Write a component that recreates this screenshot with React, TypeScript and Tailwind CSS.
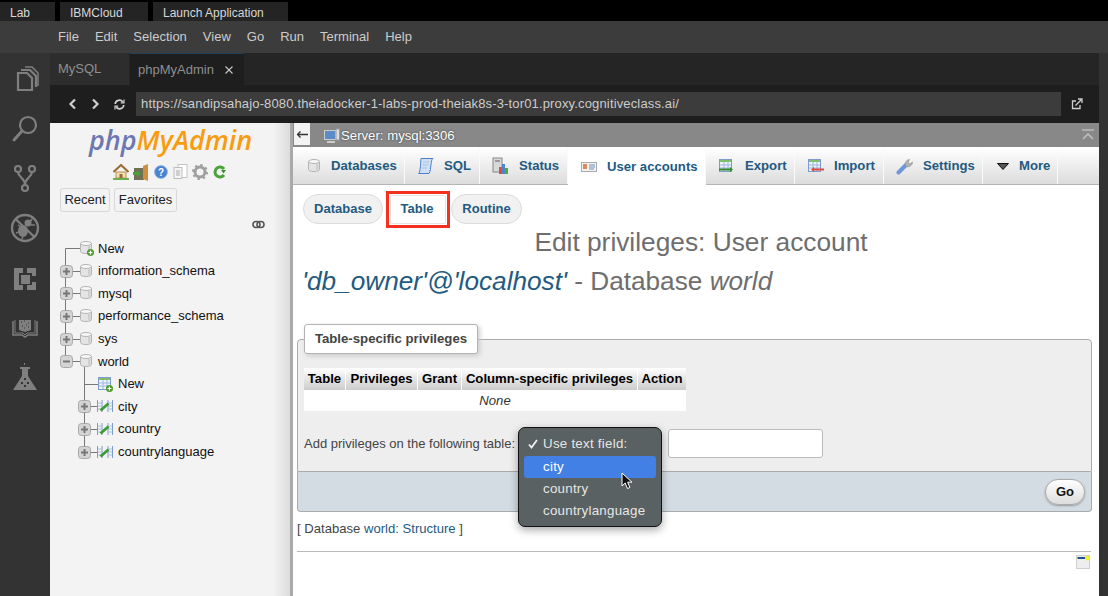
import React from "react";

const Db = ({ x = 0, y = 0 }: { x?: number; y?: number }) => (
  <g transform={`translate(${x} ${y})`}>
    <path d="M0.5 2.5v8c0 1.2 2.4 2 5.5 2s5.5-.8 5.5-2v-8z" fill="#e4e4e4" stroke="#b5b5b5" />
    <ellipse cx="6" cy="2.5" rx="5.5" ry="2" fill="#f7f7f7" stroke="#b5b5b5" />
    <rect x="8" y="5" width="2.5" height="6" fill="#cfcfcf" />
  </g>
);

const PlusBox = ({ x, y, minus }: { x: number; y: number; minus?: boolean }) => (
  <g transform={`translate(${x} ${y})`}>
    <rect x="0.5" y="0.5" width="12" height="12" rx="3" fill="#d4d4d4" stroke="#a8a8a8" />
    <rect x="3" y="5.5" width="7" height="2" fill="#777" />
    {!minus && <rect x="5.5" y="3" width="2" height="7" fill="#777" />}
  </g>
);

const GreenPlus = ({ x, y }: { x: number; y: number }) => (
  <g transform={`translate(${x} ${y})`}>
    <circle cx="3.5" cy="3.5" r="3.5" fill="#4f9a2d" />
    <path d="M1.5 3.5h4M3.5 1.5v4" stroke="#fff" strokeWidth="1.2" />
  </g>
);

const TableGlyph = ({ x, y }: { x: number; y: number }) => (
  <g transform={`translate(${x} ${y})`}>
    <rect x="0.5" y="0.5" width="12" height="12" fill="#eef3fb" stroke="#7d9ccc" />
    <rect x="1" y="1" width="11" height="2" fill="#7fc06a" />
    <path d="M1 6h11M1 9h11M5 3v9M9 3v9" stroke="#9db6dc" strokeWidth="1" />
  </g>
);

const ViewGlyph = ({ x, y }: { x: number; y: number }) => (
  <g transform={`translate(${x} ${y})`}>
    <path d="M0.5 1v12M5 1v12M11 1v12M15.5 1v12" stroke="#7d9ccc" strokeWidth="1" fill="none" />
    <path d="M1 4h4M1 7h4M1 10h4M11 4h4M11 7h4M11 10h4" stroke="#a9c0e2" strokeWidth="1" />
    <path d="M3.5 11.5L11.5 4.5" stroke="#3e9a34" strokeWidth="2.8" />
  </g>
);

type TreeKind = "rootNew" | "db" | "dbOpen" | "tblNew" | "tbl";

const TreeRow = ({ kind, label, first, last }: { kind: TreeKind; label: string; first?: boolean; last?: boolean }) => {
  const top = kind === "rootNew" || kind === "db" || kind === "dbOpen";
  const w = top ? 38 : 58;
  return (
    <div className="flex items-center h-[22.6px] text-[13px] text-[#111] leading-none">
      <svg width={w} height="23" viewBox={`0 0 ${w} 23`} className="shrink-0 overflow-visible">
        {top ? (
          <g>
            <path d={first ? "M5.5 11.5V23" : kind === "dbOpen" ? "M5.5 0V11" : "M5.5 0V23"} stroke="#777" />
            <path d="M5.5 11.5H21" stroke="#777" />
            {kind !== "rootNew" && <PlusBox x={0} y={5} minus={kind === "dbOpen"} />}
            <Db x={20} y={4} />
            {kind === "rootNew" && <GreenPlus x={27} y={12} />}
            {kind === "dbOpen" && <path d="M24.5 17V23" stroke="#777" />}
          </g>
        ) : (
          <g>
            <path d={last ? "M24.5 0V11" : "M24.5 0V23"} stroke="#777" />
            <path d="M24.5 11.5H38" stroke="#777" />
            {kind === "tblNew" ? (
              <g>
                <TableGlyph x={38} y={4} />
                <GreenPlus x={46} y={12} />
              </g>
            ) : (
              <g>
                <PlusBox x={18} y={5} />
                <ViewGlyph x={37} y={4} />
              </g>
            )}
          </g>
        )}
      </svg>
      <span className="whitespace-nowrap -mt-[1px]">{label}</span>
    </div>
  );
};

const SideIcon = ({ children, cls }: { children: React.ReactNode; cls: string }) => (
  <div className={`flex justify-center ${cls}`}>
    <svg width="30" height="30" viewBox="0 0 30 30" fill="none" stroke="#7f7f7f" strokeWidth="2.2">
      {children}
    </svg>
  </div>
);

const tabs = [
  { label: "Databases", w: "w-[111px]", gap: "w-[24px]", pl: "pl-[13px]", icon: <svg width="14" height="14" viewBox="0 0 14 14"><Db x={1} y={0} /></svg> },
  { label: "SQL", w: "w-[75px]", gap: "w-[27px]", pl: "pl-[12px]", icon: <svg width="18" height="18" viewBox="0 0 18 18"><path d="M4 1.5h12c-1.5 1-1.5 3-2 6s-.5 7-2 9H1.5c1.500-1 1.500-4 2-8s0-5.500.5-7z" fill="#cfe0f5" stroke="#4d7fc4" /><path d="M6 5h6M5.500 8h6M5 11h5" stroke="#a8c3e8" /></svg> },
  { label: "Status", w: "w-[88px]", gap: "w-[27px]", pl: "pl-[12px]", icon: <svg width="18" height="18" viewBox="0 0 18 18"><rect x="1" y="1" width="9" height="14" fill="#d8d8d8" stroke="#888" /><rect x="3" y="3" width="5" height="2" fill="#999" /><rect x="7" y="10" width="3" height="7" fill="#d94f3f" /><rect x="10" y="7" width="3" height="10" fill="#4d86d0" /><rect x="13" y="11" width="3" height="6" fill="#55a83a" /></svg> },
  { label: "User accounts", w: "w-[138px]", gap: "w-[26px]", pl: "pl-[13px]", active: true, icon: <svg width="16" height="12" viewBox="0 0 16 12"><rect x="0.500" y="1.500" width="15" height="9" fill="#f2f2f2" stroke="#aaa" /><rect x="2" y="3" width="4" height="5" fill="#d98a5f" /><path d="M8 4h6M8 6h6M8 8h5" stroke="#6d8fbe" /></svg> },
  { label: "Export", w: "w-[89px]", gap: "w-[27px]", pl: "pl-[12px]", icon: <svg width="16" height="15" viewBox="0 0 16 15"><TableGlyph x={1} y={0} /><path d="M1 10.500h12" stroke="#2f8a2a" strokeWidth="2" /><path d="M12 8l3 2.500-3 2.500z" fill="#2f8a2a" /></svg> },
  { label: "Import", w: "w-[89px]", gap: "w-[26px]", pl: "pl-[13px]", icon: <svg width="16" height="15" viewBox="0 0 16 15"><TableGlyph x={0} y={0} /><path d="M5 10.500h11" stroke="#e2443f" strokeWidth="2" /><path d="M6 8l-3 2.500 3 2.500z" fill="#e2443f" /></svg> },
  { label: "Settings", w: "w-[99px]", gap: "w-[27px]", pl: "pl-[12px]", icon: <svg width="17" height="17" viewBox="0 0 17 17"><path d="M2.500 14.500L10 7" stroke="#6f96d8" strokeWidth="4" strokeLinecap="round" /><path d="M9.500 7.500c-1-2.500.5-5.500 4-6l-1.500 3 2 1.500 2.500-2c0 3.500-3.500 5.500-6 4.500z" fill="#b3b3b3" stroke="#8a8a8a" strokeWidth="0.6" /></svg> },
  { label: "More", w: "w-[75px]", gap: "w-[22px]", pl: "pl-[14px]", icon: <svg width="12" height="7" viewBox="0 0 12 7"><path d="M0.500 0.500h11L6 6.500z" fill="#555" stroke="#111" /></svg> },
];

const Th = ({ w, children }: { w: string; children: string }) => (
  <th className={`${w} h-[22px] font-bold border-r border-white last:border-r-0 bg-gradient-to-b from-[#ffffff] to-[#cccccc] text-center p-0`}>{children}</th>
);

export default function App() {
  return (
    <div className="w-[1108px] h-[596px] overflow-hidden flex flex-col bg-black font-['Liberation_Sans','Arial',sans-serif]">
      {/* top tabs */}
      <div className="h-[21px] bg-black flex items-end text-[12px] text-[#d8d8d8] shrink-0">
        <div className="w-[55px] h-[19px] bg-[#242424] pl-[10px] leading-[23px]">Lab</div>
        <div className="w-[88px] h-[19px] bg-[#242424] ml-[5px] pl-[10px] leading-[23px]">IBMCloud</div>
        <div className="w-[135px] h-[19px] bg-[#242424] ml-[5px] pl-[10px] leading-[23px]">Launch Application</div>
      </div>
      {/* menu */}
      <div className="h-[32px] bg-[#3c3c3c] flex items-center gap-[16px] pl-[58px] text-[13px] text-[#cccccc] shrink-0">
        {["File", "Edit", "Selection", "View", "Go", "Run", "Terminal", "Help"].map((m) => (
          <span key={m}>{m}</span>
        ))}
      </div>
      <div className="flex flex-1 min-h-0">
        {/* activity bar */}
        <div className="w-[50px] bg-[#333333] shrink-0 flex flex-col pt-[10px]">
          <SideIcon cls="h-[30px] mb-[20px]">
            <path d="M17 10H8v17h14V15z" />
            <path d="M11 7h9l6 6v11" />
            <path d="M15 4h7l6 6v13" strokeWidth="1.500" />
          </SideIcon>
          <SideIcon cls="h-[30px] mb-[20px]">
            <circle cx="18" cy="12" r="8" />
            <path d="M12 18L4 27" strokeWidth="3" strokeLinecap="round" />
          </SideIcon>
          <SideIcon cls="h-[30px] mb-[20px]">
            <circle cx="8" cy="6" r="3" />
            <circle cx="22" cy="6" r="3" />
            <circle cx="15" cy="25" r="3" />
            <path d="M8 9c0 5 7 6 7 13M22 9c0 5-7 6-7 13" />
          </SideIcon>
          <SideIcon cls="h-[30px] mb-[21px]">
            <circle cx="15" cy="15" r="13" strokeWidth="2.400" />
            <path d="M5.500 6L24.500 24" strokeWidth="2.400" />
            <ellipse cx="13" cy="18" rx="5" ry="6" fill="#7f7f7f" stroke="none" />
            <circle cx="18" cy="10" r="3.500" fill="#7f7f7f" stroke="none" />
            <path d="M22 6l-2 3M25 12l-4 0M8 12l3 2M6 20l3-1M12 26l1-3" strokeWidth="1.500" />
          </SideIcon>
          <SideIcon cls="h-[30px] mb-[18px]">
            <path d="M4 4h9v5H9v12h4v5H4zM17 4h9v8h-4V9h-5zM26 18v8h-9v-5h5v-3z" fill="#7f7f7f" stroke="none" />
            <rect x="11" y="11" width="9" height="9" fill="#7f7f7f" stroke="none" />
          </SideIcon>
          <SideIcon cls="h-[30px] mb-[20px]">
            <path d="M3 9v14h9l3 2 3-2h9V9" strokeWidth="1.500" />
            <path d="M5 8v13h8l2 2 2-2h8V8" strokeWidth="1" />
            <path d="M9 8h12v10l-6 2-6-2z" fill="#7f7f7f" stroke="none" />
            <path d="M11 10h1M14 9h1M18 11h1M12 14h1M16 13h1M14 16h1M18 15h1" stroke="#333" strokeWidth="1.200" />
          </SideIcon>
          <SideIcon cls="h-[30px] mt-[1px]">
            <path d="M12 6h6v7l9 14H3l9-14z" fill="#7f7f7f" stroke="none" />
            <path d="M10 5h10" strokeWidth="2" />
            <path d="M14 1h1" strokeWidth="2" />
            <path d="M14 16h2M11 20h2M17 20h2M14 23h2" stroke="#333" strokeWidth="2" />
          </SideIcon>
        </div>
        <div className="flex-1 flex flex-col min-w-0">
          {/* editor tabs */}
          <div className="h-[32px] bg-[#252526] flex text-[13px] shrink-0">
            <div className="w-[79px] bg-[#2d2d2d] text-[#8f8f8f] pl-[8px] leading-[31px]">MySQL</div>
            <div className="w-[114px] ml-[1px] bg-[#1e1e1e] text-[#8f8f8f] pl-[8px] border-t border-[#21405c] flex items-center gap-[11px]">
              <span>phpMyAdmin</span>
              <svg width="8" height="8" viewBox="0 0 8 8"><path d="M0.500 0.500l7 7M7.500 0.500l-7 7" stroke="#c8c8c8" strokeWidth="1.100" /></svg>
            </div>
          </div>
          {/* url bar */}
          <div className="h-[38px] bg-[#1e1e1e] flex items-center shrink-0">
            <div className="w-[86px] flex items-center pl-[18px] gap-[14px] shrink-0">
              <svg width="9" height="12" viewBox="0 0 9 12"><path d="M7 1.500L2.500 6 7 10.500" fill="none" stroke="#d0d0d0" strokeWidth="2.200" /></svg>
              <svg width="9" height="12" viewBox="0 0 9 12"><path d="M2 1.500L6.500 6 2 10.500" fill="none" stroke="#d0d0d0" strokeWidth="2.200" /></svg>
              <svg width="11" height="11" viewBox="0 0 11 11" fill="none" stroke="#d0d0d0" strokeWidth="1.700"><path d="M1.200 5A4.200 4.200 0 0 1 8.800 3M9.800 6A4.200 4.200 0 0 1 2.200 8" /><path d="M10 0.500v3.300H6.800M1 10.500V7.200h3.200" strokeWidth="1.200" /></svg>
            </div>
            <div className="w-[925px] h-[24px] bg-[#3c3c3c] text-[#cccccc] text-[13px] leading-[23px] pl-[5px] tracking-[0.15px]">
              https://sandipsahajo-8080.theiadocker-1-labs-prod-theiak8s-3-tor01.proxy.cognitiveclass.ai/
            </div>
            <svg className="ml-[10px]" width="12" height="12" viewBox="0 0 12 12" fill="none" stroke="#d0d0d0" strokeWidth="1.300"><path d="M9 7v3.500H1.500V3H5" /><path d="M4.500 7.500L10 2M7 1h4v4" /></svg>
          </div>
          {/* browser */}
          <div className="flex-1 flex min-h-0 bg-white">
            {/* nav */}
            <div className="w-[240px] shrink-0 flex flex-col bg-gradient-to-r from-[#f3f3f3] from-[93%] to-[#dcdcdc]">
              <div className="text-center font-['Open_Sans'] font-semibold italic text-[27px] leading-[34px] pl-[1px]">
                <span className="text-[#6c78af]">php</span><span className="text-[#f89c0e]">MyAdmin</span>
              </div>
              <div className="flex justify-start pl-[63px] mt-[7px] h-[17px] gap-[4px]">
                <svg width="16" height="16" viewBox="0 0 16 16"><path d="M0.500 8L8 1l7.500 7" fill="none" stroke="#9a6a2f" strokeWidth="2" /><rect x="3" y="8" width="10" height="6" fill="#f1dfb8" stroke="#b98e4f" /><rect x="6.500" y="10" width="3" height="4" fill="#9a6a2f" /><path d="M0 15h16" stroke="#6ab04c" strokeWidth="2" /></svg>
                <svg width="16" height="17" viewBox="0 0 16 17"><rect x="1" y="4" width="10" height="12" fill="#6f6f55" /><path d="M10 15V2l5-2v17z" fill="#cf8f3e" /><path d="M0 8h4V6l4 3.500L4 13v-2H0z" fill="#48a23a" /></svg>
                <svg className="ml-[1px] mt-[1px]" width="14" height="14" viewBox="0 0 14 14"><circle cx="7" cy="7" r="6.500" fill="#4a82cf" stroke="#9dbbe6" /><text x="7" y="10.500" textAnchor="middle" fontSize="10" fontWeight="bold" fill="#fff" fontFamily="Liberation Sans">?</text></svg>
                <svg className="ml-[1px]" width="15" height="15" viewBox="0 0 15 15"><rect x="5" y="0.500" width="9" height="13" fill="#fff" stroke="#c4c4c4" /><rect x="1" y="3.500" width="8" height="11" fill="#f4f4f4" stroke="#bdbdbd" /><path d="M3 6h4v6H3z" fill="#cfcfcf" /></svg>
                <svg width="16" height="16" viewBox="0 0 16 16"><circle cx="8" cy="8" r="5" fill="none" stroke="#a0a0a0" strokeWidth="3" /><circle cx="8" cy="8" r="7" fill="none" stroke="#a0a0a0" strokeWidth="2" strokeDasharray="2.500 3" /></svg>
                <svg className="ml-[1px] mt-[1px]" width="13" height="14" viewBox="0 0 13 14" fill="none"><path d="M11 4A5 5 0 1 0 11 10" stroke="#49a23a" strokeWidth="3" /><path d="M8 5h5l-2.500 3.500z" fill="#3d8e30" /></svg>
              </div>
              <div className="flex pl-[10px] gap-[4px] mt-[7px] text-[13px] text-[#222]">
                <div className="w-[50px] h-[24px] leading-[22px] text-center border border-[#d8d8d8] rounded-[3px] bg-[#f3f3f3]">Recent</div>
                <div className="w-[63px] h-[24px] leading-[22px] text-center border border-[#d8d8d8] rounded-[3px] bg-[#f3f3f3]">Favorites</div>
              </div>
              <div className="flex justify-end pr-[25px] mt-[8px] h-[10px]">
                <svg width="13" height="9" viewBox="0 0 13 9" fill="none" stroke="#555" strokeWidth="1.600"><rect x="1" y="1.500" width="7" height="6" rx="3" /><rect x="5" y="1.500" width="7" height="6" rx="3" /></svg>
              </div>
              <div className="pl-[10px] mt-[7.4px]">
                <TreeRow kind="rootNew" label="New" first />
                <TreeRow kind="db" label="information_schema" />
                <TreeRow kind="db" label="mysql" />
                <TreeRow kind="db" label="performance_schema" />
                <TreeRow kind="db" label="sys" />
                <TreeRow kind="dbOpen" label="world" />
                <TreeRow kind="tblNew" label="New" />
                <TreeRow kind="tbl" label="city" />
                <TreeRow kind="tbl" label="country" />
                <TreeRow kind="tbl" label="countrylanguage" last />
              </div>
            </div>
            <div className="w-[3px] bg-[#a9a9a9] shrink-0" />
            {/* main */}
            <div className="flex-1 min-w-0 relative text-[13px] text-[#444]">
              <div className="h-[24px] bg-[#888888] flex items-center">
                <div className="w-[16px] h-[22px] -mt-[2px] ml-[1px] bg-[#f3f3f3] flex items-center justify-center">
                  <svg width="11" height="7" viewBox="0 0 11 7"><path d="M3.500 0.500L0.500 3.500l3 3M1 3.500h10" fill="none" stroke="#333" strokeWidth="1.300" /></svg>
                </div>
                <svg className="ml-[14px]" width="16" height="15" viewBox="0 0 16 15"><rect x="0.500" y="2.500" width="11" height="9" fill="#5b8cc9" stroke="#ccc" /><rect x="12" y="1" width="3.500" height="11" fill="#ddd" stroke="#999" /><path d="M3 14h8" stroke="#ccc" strokeWidth="2" /></svg>
                <span className="ml-[1px] mt-[1px] text-[13.2px] text-white [text-shadow:0_0_2px_#333]">Server: mysql:3306</span>
                <svg className="ml-auto mr-[5px]" width="12" height="12" viewBox="0 0 12 12" fill="none" stroke="#bdbdbd" strokeWidth="1.600"><path d="M0 1h12" strokeWidth="1.500" /><path d="M1 10l5-5 5 5" /></svg>
              </div>
              <div className="h-[37px] mt-[1px] pl-[1px] flex border-b border-[#b5b5b5] bg-gradient-to-b from-[#ffffff] to-[#dcdcdc]">
                {tabs.map((t) => (
                  <div
                    key={t.label}
                    className={`${t.w} ${t.pl} shrink-0 flex items-center border-r border-[#fafafa] font-bold text-[#235a81] text-[13.15px] ${t.active ? "bg-white h-[37px]" : "bg-gradient-to-b from-[#ffffff] to-[#dcdcdc]"}`}
                  >
                    <span className={`${t.gap} shrink-0 flex items-center`}>{t.icon}</span>
                    <span className="whitespace-nowrap">{t.label}</span>
                  </div>
                ))}
              </div>
              {/* sub tabs */}
              <div className="flex items-center pl-[10px] mt-[9px] h-[30px] font-bold text-[#235a81] text-[13px]">
                <div className="w-[80px] h-[30px] leading-[28px] text-center rounded-full border border-[#dcdcdc] bg-[#f1f1f1]">Database</div>
                <div className="ml-[3px] w-[64px] h-[37px] border-[3px] border-[#f5301e] flex items-center justify-center p-[1px] shrink-0">
                  <div className="w-full h-full bg-white border border-[#e5e5e5] rounded-[2px] flex items-center justify-center pr-[2px]">Table</div>
                </div>
                <div className="ml-[1px] w-[71px] h-[30px] leading-[28px] text-center rounded-full border border-[#dcdcdc] bg-[#f1f1f1]">Routine</div>
              </div>
              <div className="text-center text-[26.3px] text-[#6e6e6e] leading-[30px] mt-[3px] pl-[10px]">Edit privileges: User account</div>
              <div className="text-[26.2px] text-[#6e6e6e] leading-[30px] pl-[9px] mt-[9px] whitespace-nowrap">
                <i className="text-[#235a81]">'db_owner'@'localhost'</i> - Database <i>world</i>
              </div>
              {/* legend + fieldset */}
              <div className="mx-[4px] mt-[28px] w-[795px]">
                <div className="pt-[15px] relative">
                  <div className="absolute left-[7px] top-0 w-[174px] h-[30px] bg-white border border-[#b3b3b3] rounded-[3px] shadow-[2px_2px_5px_#ccc] font-bold text-[13.2px] text-[#444] leading-[28px] text-center">
                    Table-specific privileges
                  </div>
                  <div className="h-[133px] bg-[#eeeeee] border border-[#aaaaaa] rounded-t-[4px] pt-[28px] pl-[6px]">
                    <table className="w-[382px] table-fixed border-separate border-spacing-0 text-[13.15px] text-black">
                      <thead>
                        <tr>
                          <Th w="w-[42px]">Table</Th>
                          <Th w="w-[72px]">Privileges</Th>
                          <Th w="w-[44px]">Grant</Th>
                          <Th w="w-[176px]">Column-specific privileges</Th>
                          <Th w="w-[48px]">Action</Th>
                        </tr>
                      </thead>
                      <tbody>
                        <tr>
                          <td colSpan={5} className="h-[21px] bg-white text-center italic text-[#333] p-0">None</td>
                        </tr>
                      </tbody>
                    </table>
                    <div className="flex items-center mt-[18px] h-[29px]">
                      <span className="w-[212px] shrink-0 text-[13px] text-[#444] whitespace-nowrap">Add privileges on the following table:</span>
                      <div className="ml-[152px] w-[155px] h-[29px] bg-white border border-[#bbbbbb] rounded-[3px] shrink-0" />
                    </div>
                  </div>
                </div>
                <div className="h-[40px] bg-[#d3dce3] border border-t-0 border-[#aaaaaa] rounded-b-[4px] flex items-center justify-end pr-[6px]">
                  <div className="w-[40px] h-[26px] rounded-full border border-[#aaaaaa] bg-gradient-to-b from-[#ffffff] to-[#dddddd] shadow-[0_1px_2px_#999] font-bold text-[#111] text-center leading-[24px]">Go</div>
                </div>
              </div>
              <div className="ml-[4px] mt-[9px] text-[13.1px] leading-[15px]">
                [ Database <span className="text-[#235a81]">world: Structure</span> ]
              </div>
              <div className="ml-[4px] mt-[15px] w-[794px] border-t border-[#bbbbbb]" />
              <div className="flex justify-end mr-[9px] mt-[3px]">
                <svg width="14" height="15" viewBox="0 0 14 15"><rect x="0.500" y="0.500" width="13" height="13" fill="#eeeeee" stroke="#cfcfcf" /><rect x="1.500" y="2" width="8" height="2" fill="#21508f" /><circle cx="11.500" cy="3" r="2.500" fill="#f5ee30" /></svg>
              </div>
              {/* select popup */}
              <div className="absolute left-[225px] top-[304px] w-[144px] h-[100px] bg-[#5a6162] border border-[#111] rounded-[7px] shadow-[0_3px_8px_rgba(0,0,0,0.35)] text-[13.33px] text-[#e6e6e6] pt-[6px] px-[5px] tracking-[0.25px]">
                <div className="h-[22px] leading-[20px] pl-[19px] relative">
                  <svg className="absolute left-[4px] top-[5px]" width="10" height="10" viewBox="0 0 10 10"><path d="M1 5.500l2.500 3L9 1" fill="none" stroke="#f2f2f2" strokeWidth="1.800" /></svg>
                  Use text field:
                </div>
                <div className="h-[22px] leading-[21px] pl-[19px] bg-[#4280e6] rounded-[3px] text-white">city</div>
                <div className="h-[22px] leading-[22px] pl-[19px]">country</div>
                <div className="h-[22px] leading-[21px] pl-[19px]">countrylanguage</div>
              </div>
              <svg className="absolute left-[328px] top-[349px]" width="13" height="18" viewBox="0 0 13 18"><path d="M1 1v13l3.200-3 2.300 5.500 2.400-1-2.300-5.300h4.400z" fill="#111" stroke="#fff" strokeWidth="1" /></svg>
            </div>
          </div>
        </div>
        <div className="w-[9px] bg-[#333333] shrink-0" />
      </div>
    </div>
  );
}
